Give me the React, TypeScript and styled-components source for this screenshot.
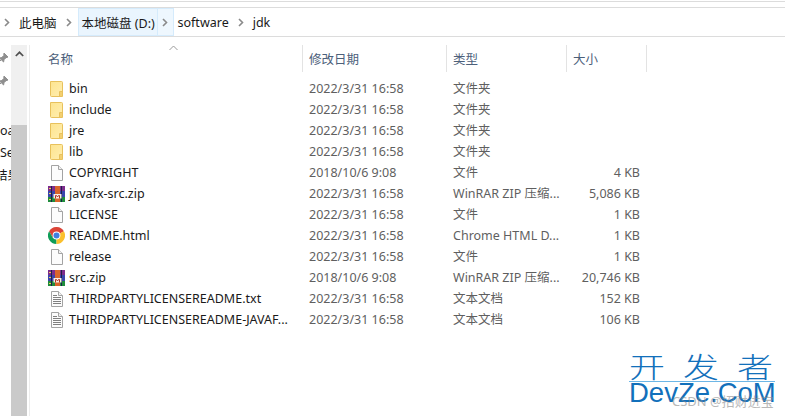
import React from 'react';
import styled, { createGlobalStyle } from 'styled-components';

const Global = createGlobalStyle`
  html, body { margin: 0; padding: 0; background: #fff; }
  body { font-family: "Noto Sans", "Noto Sans CJK SC", sans-serif; font-size: 12px; color: #1a1a1a; }
`;

const Window = styled.div`
  position: relative;
  width: 785px;
  height: 416px;
  overflow: hidden;
  background: #fff;
  display: flex;
  flex-direction: column;
`;

const TopStrip = styled.div`
  height: 7px;
  flex: none;
  box-sizing: border-box;
  margin-top: 1px;
  border-top: 1px solid #dcdcdc;
  border-bottom: 1px solid #dcdcdc;
`;

const AddressBar = styled.div`
  height: 29px;
  flex: none;
  display: flex;
  align-items: center;
  box-sizing: border-box;
  border-bottom: 1px solid #dcdcdc;
`;

const Crumb = styled.span<{ $active?: boolean; $first?: boolean }>`
  height: 28px;
  display: flex;
  align-items: center;
  padding: 0 4px 0 ${p => (p.$first ? '6px' : '4px')};
  box-sizing: border-box;
  white-space: nowrap;
  font-size: 12.5px;
  ${p => p.$active && 'width: 80px; background: #eaf5fe; border: 1px solid #d5ebfc; padding: 0 0 0 3px;'}
`;

const Chevron = styled.span<{ $active?: boolean; $width: number }>`
  width: ${p => p.$width}px;
  height: 28px;
  flex: none;
  display: flex;
  align-items: center;
  justify-content: center;
  box-sizing: border-box;
  ${p => p.$active && 'background: #eef7fe; border: 1px solid #d5ebfc; border-left: none;'}
`;

const Body = styled.div`
  flex: 1;
  display: flex;
  min-height: 0;
`;

const Sidebar = styled.div`
  width: 11px;
  flex: none;
  overflow: hidden;
  padding-top: 14px;
  display: flex;
  flex-direction: column;
  align-items: flex-start;
`;

const Pin = styled.div`
  height: 23px;
  flex: none;
  margin-left: -3px;
`;

const SideGap = styled.div`
  height: 22.5px;
  flex: none;
`;

const SideText = styled.div<{ $shift?: number }>`
  height: 22.5px;
  line-height: 22.5px;
  white-space: nowrap;
  font-size: 12.5px;
  flex: none;
  margin-left: ${p => p.$shift ?? 0}px;
`;

const Scrollbar = styled.div`
  width: 16px;
  flex: none;
  margin-top: 8px;
  background: #f0f0f0;
  display: flex;
  flex-direction: column;
`;

const ScrollArrow = styled.div`
  height: 17px;
  flex: none;
  display: flex;
  align-items: center;
  justify-content: center;
`;

const ScrollGap = styled.div`
  height: 63px;
  flex: none;
`;

const ScrollThumb = styled.div`
  flex: 1;
  background: #cacaca;
`;

const Pane = styled.div`
  flex: 1;
  margin-left: 2px;
  margin-top: 8px;
  border-left: 1px solid #ececec;
  display: flex;
  flex-direction: column;
  position: relative;
`;

const HeaderRow = styled.div`
  height: 27px;
  flex: none;
  display: grid;
  grid-template-columns: 273px 144px 120px 80px;
`;

const HeaderCell = styled.div`
  display: flex;
  align-items: center;
  padding-left: 6px;
  box-sizing: border-box;
  border-right: 1px solid #e3e3e3;
  color: #4c607a;
  font-size: 12.5px;
  &:first-child { padding-left: 18px; }
`;

const SortArrow = styled.svg`
  position: absolute;
  left: 139px;
  top: 0;
`;

const List = styled.div`
  padding-top: 6px;
  display: flex;
  flex-direction: column;
`;

const Row = styled.div`
  height: 21px;
  display: grid;
  grid-template-columns: 273px 144px 120px 80px;
  align-items: center;
  line-height: 21px;
`;

const NameCell = styled.div`
  display: flex;
  align-items: center;
  padding-left: 18px;
  gap: 4px;
  white-space: nowrap;
  font-size: 12.5px;
  color: #1a1a1a;
`;

const IconBox = styled.span`
  width: 17px;
  height: 17px;
  flex: none;
  display: flex;
  align-items: center;
  justify-content: center;
`;

const InfoCell = styled.div`
  padding-left: 6px;
  color: #5f5f5f;
  white-space: nowrap;
  font-size: 12.5px;
`;

const SizeCell = styled(InfoCell)`
  padding-left: 0;
  padding-right: 7px;
  text-align: right;
`;

const Mark = styled.div`
  position: absolute;
  left: 629px;
  top: 351px;
  width: 146px;
  display: flex;
  flex-direction: column;
  color: #1270bb;
`;

const MarkTitle = styled.div`
  display: flex;
  justify-content: space-between;
  font-family: "Noto Sans CJK SC", sans-serif;
  font-size: 36px;
  line-height: 30px;
  height: 30px;
  font-weight: 300;
  padding-right: 2px;
  transform: scaleY(0.78);
`;

const MarkRule = styled.div`
  height: 1px;
  background: #6db6e6;
`;

const MarkLatin = styled.div`
  font-family: "Liberation Sans", sans-serif;
  font-size: 27.5px;
  line-height: 22px;
  white-space: nowrap;
`;

const MarkCredit = styled.div`
  position: absolute;
  left: 672px;
  top: 391px;
  color: #8a8a8a;
  opacity: 0.6;
  font-size: 13px;
  white-space: nowrap;
`;

const ChevronIcon = () => (
  <svg width="6" height="9" viewBox="0 0 6 9">
    <path d="M1 1l3.500 3.500L1 8" fill="none" stroke="#8a8a8a" strokeWidth="1.600" />
  </svg>
);

const PinIcon = () => (
  <svg width="12" height="12" viewBox="0 0 12 12">
    <path d="M7 1l4 4-2 .7-2 2-.4 2.300L2.500 6 4.800 5.500l2-2z M4 8l-3 3" fill="#8f8f8f" stroke="#8f8f8f" strokeWidth="1" />
  </svg>
);

const FolderIcon = () => (
  <svg width="13" height="16" viewBox="0 0 13 16">
    <defs>
      <linearGradient id="folderFill" x1="0" y1="0" x2="1" y2="1">
        <stop offset="0" stopColor="#fde48f" />
        <stop offset="1" stopColor="#ffeeb0" />
      </linearGradient>
    </defs>
    <path d="M.5.500h11a1 1 0 0 1 1 1v14H1.500a1 1 0 0 1-1-1z" fill="url(#folderFill)" stroke="#e8c15c" />
    <path d="M9.500 15.500v-5h3" fill="none" stroke="#e8c15c" />
    <rect x="10" y="11" width="2" height="4" fill="#f3cf70" />
  </svg>
);

const FileIcon = ({ lines }: { lines?: boolean }) => (
  <svg width="12" height="16" viewBox="0 0 12 16">
    <path d="M.5.500h7l4 4v11H.5z" fill="#fcfcfc" stroke="#a3a3a3" />
    <path d="M7.500.500v4h4" fill="#f1f1f1" stroke="#a3a3a3" />
    {lines && <path d="M2 4.500h4M2 6.500h8M2 8.500h8M2 10.500h8M2 12.500h8" stroke="#808080" />}
  </svg>
);

const RarIcon = () => (
  <svg width="17" height="16" viewBox="0 0 17 16">
    <rect x="0" y="0" width="17" height="5" fill="#7d2d8c" />
    <rect x="0" y="5" width="17" height="6" fill="#3a45ad" />
    <rect x="0" y="11" width="17" height="5" fill="#1f8c3c" />
    <rect x="7" y="0" width="5" height="16" fill="#d9662b" />
    <rect x="3" y="0" width="1" height="16" fill="#20204a" />
    <rect x="13" y="0" width="1" height="16" fill="#20204a" />
    <path d="M1 2.500h2M1 7.500h2M1 13.500h2" stroke="#f2d24e" />
    <rect x="5.500" y="8" width="8" height="4.500" fill="#f7efe6" />
    <path d="M7.500 12.500V9.500h1l1 1.500 1-1.500h1v3" fill="none" stroke="#b5301f" />
  </svg>
);

const ChromeIcon = () => (
  <svg width="17" height="17" viewBox="0 0 48 48">
    <path d="M24 24 L44.800 12 A24 24 0 0 0 3.200 12 L13.600 30z" fill="#db4437" />
    <path d="M24 24 L13.600 30 L3.200 12 A24 24 0 0 0 24 48z" fill="#0f9d58" />
    <path d="M24 24 L44.800 12 A24 24 0 0 1 24 48z" fill="#fbc02d" />
    <circle cx="24" cy="24" r="11" fill="#fff" />
    <circle cx="24" cy="24" r="8.500" fill="#3f7fe0" />
  </svg>
);

type Kind = 'folder' | 'file' | 'text' | 'rar' | 'chrome';

const icons: Record<Kind, React.ReactNode> = {
  folder: <FolderIcon />,
  file: <FileIcon />,
  text: <FileIcon lines />,
  rar: <RarIcon />,
  chrome: <ChromeIcon />,
};

const files: { name: string; date: string; type: string; size: string; kind: Kind }[] = [
  { name: 'bin', date: '2022/3/31 16:58', type: '文件夹', size: '', kind: 'folder' },
  { name: 'include', date: '2022/3/31 16:58', type: '文件夹', size: '', kind: 'folder' },
  { name: 'jre', date: '2022/3/31 16:58', type: '文件夹', size: '', kind: 'folder' },
  { name: 'lib', date: '2022/3/31 16:58', type: '文件夹', size: '', kind: 'folder' },
  { name: 'COPYRIGHT', date: '2018/10/6 9:08', type: '文件', size: '4 KB', kind: 'file' },
  { name: 'javafx-src.zip', date: '2022/3/31 16:58', type: 'WinRAR ZIP 压缩...', size: '5,086 KB', kind: 'rar' },
  { name: 'LICENSE', date: '2022/3/31 16:58', type: '文件', size: '1 KB', kind: 'file' },
  { name: 'README.html', date: '2022/3/31 16:58', type: 'Chrome HTML D...', size: '1 KB', kind: 'chrome' },
  { name: 'release', date: '2022/3/31 16:58', type: '文件', size: '1 KB', kind: 'file' },
  { name: 'src.zip', date: '2018/10/6 9:08', type: 'WinRAR ZIP 压缩...', size: '20,746 KB', kind: 'rar' },
  { name: 'THIRDPARTYLICENSEREADME.txt', date: '2022/3/31 16:58', type: '文本文档', size: '152 KB', kind: 'text' },
  { name: 'THIRDPARTYLICENSEREADME-JAVAF...', date: '2022/3/31 16:58', type: '文本文档', size: '106 KB', kind: 'text' },
];

export default function App() {
  return (
    <>
      <Global />
      <Window>
        <TopStrip />
        <AddressBar>
          <Chevron $width={13}><ChevronIcon /></Chevron>
          <Crumb $first>此电脑</Crumb>
          <Chevron $width={17}><ChevronIcon /></Chevron>
          <Crumb $active>本地磁盘 (D:)</Crumb>
          <Chevron $active $width={16}><ChevronIcon /></Chevron>
          <Crumb>software</Crumb>
          <Chevron $width={16}><ChevronIcon /></Chevron>
          <Crumb>jdk</Crumb>
        </AddressBar>
        <Body>
          <Sidebar>
            <Pin><PinIcon /></Pin>
            <Pin><PinIcon /></Pin>
            <SideGap />
            <SideText>oa</SideText>
            <SideText>Se</SideText>
            <SideText $shift={-5}>结果</SideText>
          </Sidebar>
          <Scrollbar>
            <ScrollArrow>
              <svg width="9" height="6" viewBox="0 0 9 6">
                <path d="M.8 5l3.700-3.700L8.200 5" fill="none" stroke="#505050" strokeWidth="1.700" />
              </svg>
            </ScrollArrow>
            <ScrollGap />
            <ScrollThumb />
          </Scrollbar>
          <Pane>
            <SortArrow width="9" height="6" viewBox="0 0 9 6">
              <path d="M.5 5l4-4 4 4" fill="none" stroke="#9a9a9a" />
            </SortArrow>
            <HeaderRow>
              <HeaderCell>名称</HeaderCell>
              <HeaderCell>修改日期</HeaderCell>
              <HeaderCell>类型</HeaderCell>
              <HeaderCell>大小</HeaderCell>
            </HeaderRow>
            <List>
              {files.map(f => (
                <Row key={f.name}>
                  <NameCell>
                    <IconBox>{icons[f.kind]}</IconBox>
                    {f.name}
                  </NameCell>
                  <InfoCell>{f.date}</InfoCell>
                  <InfoCell>{f.type}</InfoCell>
                  <SizeCell>{f.size}</SizeCell>
                </Row>
              ))}
            </List>
          </Pane>
        </Body>
        <Mark>
          <MarkTitle><span>开</span><span>发</span><span>者</span></MarkTitle>
          <MarkRule />
          <MarkLatin>DevZe.CoM</MarkLatin>
        </Mark>
        <MarkCredit>CSDN @招财进宝</MarkCredit>
      </Window>
    </>
  );
}
